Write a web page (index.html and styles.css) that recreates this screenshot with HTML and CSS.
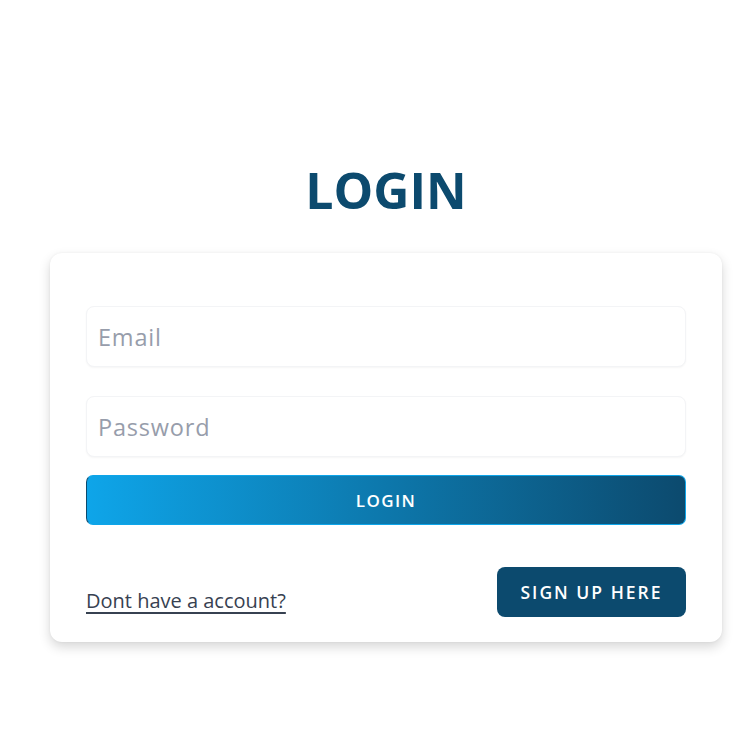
FILE: index.html
```html
<!DOCTYPE html>
<html>
<head>
<meta charset="utf-8">
<link rel="stylesheet" href="styles.css">
</head>
<body>
<main class="page">
  <h1 class="title">LOGIN</h1>
  <form class="card">
    <input class="field" type="email" placeholder="Email">
    <input class="field field-password" type="password" placeholder="Password">
    <button class="btn-login" type="button">LOGIN</button>
    <div class="bottom-row">
      <a class="link" href="#">Dont have a account?</a>
      <button class="btn-signup" type="button">SIGN UP HERE</button>
    </div>
  </form>
</main>
</body>
</html>
```
FILE: styles.css
```css
* { box-sizing: border-box; }
html, body { margin: 0; padding: 0; background: #ffffff; }
body { font-family: "Open Sans", "Noto Sans", sans-serif; min-height: 737px; }
.page {
  padding-top: 154px;
  padding-left: 50px;
  padding-bottom: 80px;
  width: 722px;
}
.title {
  margin: 0 0 27px 0;
  text-align: center;
  font-size: 50px;
  font-weight: 700;
  color: #0c4a6e;
  line-height: 72px;
}
.card {
  display: flex;
  flex-direction: column;
  background: #fff;
  border-radius: 12px;
  box-shadow: 0 5px 12px rgba(0,0,0,0.16), 0 0 3px rgba(0,0,0,0.05);
  padding: 53px 36px 25px 36px;
}
.field {
  height: 61px;
  border: 1px solid #f3f4f6;
  border-radius: 8px;
  box-shadow: 0 1px 2px rgba(0,0,0,0.04);
  padding: 0 11px;
  font-family: "Open Sans", "Noto Sans", sans-serif;
  font-size: 23.5px;
  letter-spacing: 0.8px;
  color: #111;
  outline: none;
  background: #fff;
}
.field::placeholder { color: #979dab; }
.field-password { margin-top: 29px; }
.btn-login {
  margin-top: 18px;
  height: 50px;
  border-radius: 7px;
  border: 1px solid #0ea5e9;
  border-left-color: #0c4a6e;
  background: linear-gradient(90deg, #0ea5e9 0%, #0c4a6e 100%);
  color: #fff;
  font-family: "Open Sans", sans-serif;
  font-weight: 600;
  font-size: 17px;
  letter-spacing: 1.4px;
}
.bottom-row {
  margin-top: 42px;
  display: flex;
  justify-content: space-between;
  align-items: flex-end;
}
.link {
  color: #374151;
  font-size: 20px;
  text-decoration: underline;
  text-decoration-thickness: 2px;
  text-underline-offset: 4px;
  line-height: 1;
  padding-bottom: 6px;
}
.btn-signup {
  width: 189px;
  height: 50px;
  border: none;
  border-radius: 8px;
  background: #0c4a6e;
  color: #fff;
  font-family: "Open Sans", sans-serif;
  font-weight: 600;
  font-size: 17.5px;
  letter-spacing: 2px;
}
```
